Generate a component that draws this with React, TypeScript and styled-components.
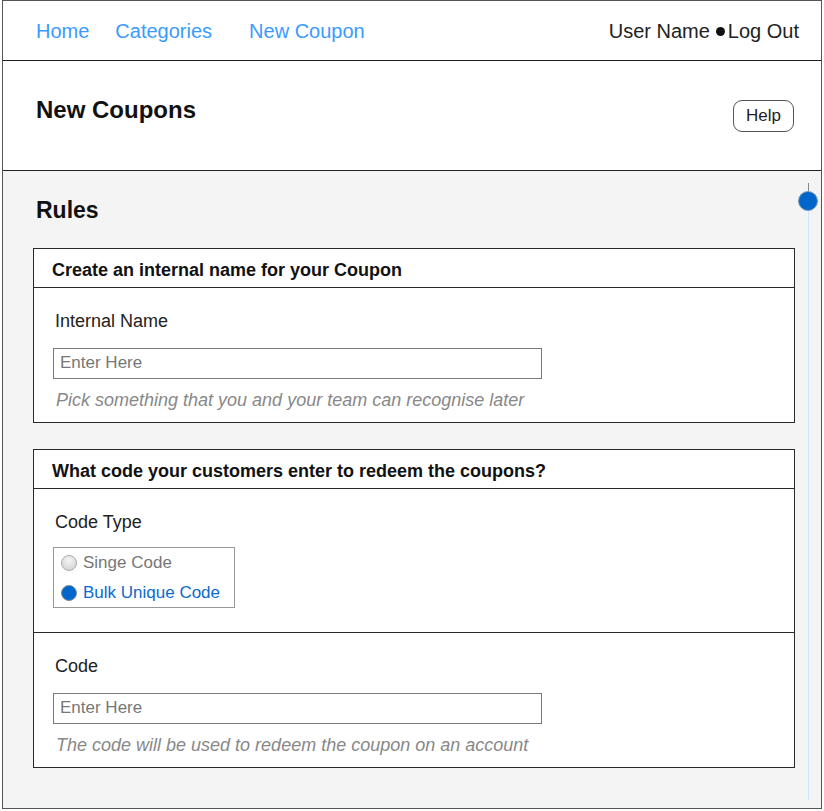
import React from "react";
import styled, { createGlobalStyle } from "styled-components";

const Global = createGlobalStyle`
  html, body { margin: 0; padding: 0; background: #ffffff; }
  body { font-family: "Liberation Sans", Arial, sans-serif; color: #222; }
  * { box-sizing: border-box; }
`;

const Frame = styled.div`
  width: 820px;
  height: 809px;
  margin-left: 2px;
  position: relative;
  background: #f4f4f4;
  border: 1px solid #555;
  display: flex;
  flex-direction: column;
`;

const Nav = styled.nav`
  height: 60px;
  background: #fff;
  border-bottom: 1.2px solid #222;
  display: flex;
  align-items: center;
  padding: 2px 22px 0 33px;
  font-size: 20px;
`;

const NavLink = styled.a<{ $gap: number }>`
  color: #3a9bff;
  text-decoration: none;
  margin-right: ${(p) => p.$gap}px;
`;

const UserBox = styled.div`
  margin-left: auto;
  display: flex;
  align-items: center;
  color: #222;
  font-size: 20px;
`;

const Dot = styled.span`
  display: inline-block;
  width: 9px;
  height: 9px;
  border-radius: 50%;
  background: #111;
  margin: 0 3px 0 6px;
`;

const TitlePanel = styled.header`
  height: 110px;
  background: #fff;
  border-bottom: 1.2px solid #222;
  display: flex;
  align-items: flex-start;
  justify-content: space-between;
  padding: 35px 27px 0 33px;
`;

const PageTitle = styled.h1`
  margin: 0;
  font-size: 24px;
  line-height: 28px;
  font-weight: bold;
  color: #111;
`;

const HelpButton = styled.button`
  margin-top: 4px;
  width: 61px;
  height: 32px;
  border: 1px solid #555;
  border-radius: 9px;
  background: #fff;
  font-family: "Liberation Sans", Arial, sans-serif;
  font-size: 17px;
  color: #222;
  padding: 0;
`;

const Main = styled.main`
  position: relative;
  flex: 1;
  padding: 25px 27px 0 30px;
  display: flex;
  flex-direction: column;
`;

const SectionTitle = styled.h2`
  margin: 0 0 24px 3px;
  font-size: 23px;
  line-height: 28px;
  font-weight: bold;
  color: #111;
`;

const Card = styled.section<{ $gapAfter: number }>`
  width: 762px;
  background: #fff;
  border: 1.2px solid #2a2a2a;
  margin-bottom: ${(p) => p.$gapAfter}px;
  display: flex;
  flex-direction: column;
`;

const CardHeader = styled.div`
  height: 39px;
  border-bottom: 1.2px solid #2a2a2a;
  display: flex;
  align-items: center;
  padding: 4px 0 0 18px;
  font-size: 18px;
  font-weight: bold;
  color: #111;
`;

const CardBody = styled.div<{ $top: number; $bottom: number; $divider?: boolean }>`
  padding: ${(p) => p.$top}px 0 ${(p) => p.$bottom}px 19px;
  border-bottom: ${(p) => (p.$divider ? "1.2px solid #2a2a2a" : "none")};
  display: flex;
  flex-direction: column;
  align-items: flex-start;
`;

const Label = styled.div<{ $gap: number }>`
  font-size: 18px;
  line-height: 22px;
  margin-left: 2px;
  color: #222;
  margin-bottom: ${(p) => p.$gap}px;
`;

const TextInput = styled.input`
  width: 489px;
  height: 31px;
  border: 1px solid #7a7a7a;
  background: #fff;
  padding: 0 6px 2px;
  font-family: "Liberation Sans", Arial, sans-serif;
  font-size: 17px;
  color: #222;
  outline: none;
  &::placeholder { color: #777; }
`;

const Hint = styled.div`
  margin-top: 10px;
  margin-left: 3px;
  font-size: 18px;
  line-height: 22px;
  font-style: italic;
  color: #888;
`;

const RadioGroup = styled.div`
  width: 182px;
  height: 61px;
  border: 1px solid #999;
  padding: 4px 0 0 7px;
  display: flex;
  flex-direction: column;
  gap: 8px;
`;

const RadioRow = styled.label<{ $selected: boolean }>`
  display: flex;
  align-items: center;
  height: 22px;
  font-size: 17px;
  color: ${(p) => (p.$selected ? "#0a6ad0" : "#777")};
`;

const RadioDot = styled.span<{ $selected: boolean }>`
  width: 16px;
  height: 16px;
  border-radius: 50%;
  margin-right: 6px;
  border: 1px solid ${(p) => (p.$selected ? "#7a8a9a" : "#aaa")};
  background: ${(p) =>
    p.$selected ? "#0066cc" : "radial-gradient(circle at 50% 30%, #f4f4f4, #cfcfcf)"};
`;

const SliderTrack = styled.div`
  position: absolute;
  right: 12px;
  top: 12px;
  bottom: 8px;
  width: 2px;
  display: flex;
  flex-direction: column;
  align-items: center;
`;

const TrackTop = styled.span`
  width: 1px;
  height: 8px;
  background: #888;
  flex: none;
`;

const Knob = styled.span`
  width: 20px;
  height: 20px;
  border-radius: 50%;
  background: #0066cc;
  border: 1px solid #7f9ab5;
  flex: none;
`;

const TrackLine = styled.span`
  width: 1px;
  flex: 1;
  background: #cfe6ff;
`;

export default function App() {
  return (
    <>
      <Global />
      <Frame>
        <Nav>
          <NavLink $gap={26}>Home</NavLink>
          <NavLink $gap={37}>Categories</NavLink>
          <NavLink $gap={0}>New Coupon</NavLink>
          <UserBox>
            User Name<Dot />Log Out
          </UserBox>
        </Nav>
        <TitlePanel>
          <PageTitle>New Coupons</PageTitle>
          <HelpButton>Help</HelpButton>
        </TitlePanel>
        <Main>
          <SectionTitle>Rules</SectionTitle>
          <Card $gapAfter={26}>
            <CardHeader>Create an internal name for your Coupon</CardHeader>
            <CardBody $top={22} $bottom={11}>
              <Label $gap={16}>Internal Name</Label>
              <TextInput placeholder="Enter Here" />
              <Hint>Pick something that you and your team can recognise later</Hint>
            </CardBody>
          </Card>
          <Card $gapAfter={0}>
            <CardHeader>What code your customers enter to redeem the coupons?</CardHeader>
            <CardBody $top={22} $bottom={24} $divider>
              <Label $gap={14}>Code Type</Label>
              <RadioGroup>
                <RadioRow $selected={false}>
                  <RadioDot $selected={false} />
                  Singe Code
                </RadioRow>
                <RadioRow $selected={true}>
                  <RadioDot $selected={true} />
                  Bulk Unique Code
                </RadioRow>
              </RadioGroup>
            </CardBody>
            <CardBody $top={22} $bottom={11}>
              <Label $gap={16}>Code</Label>
              <TextInput placeholder="Enter Here" />
              <Hint>The code will be used to redeem the coupon on an account</Hint>
            </CardBody>
          </Card>
          <SliderTrack>
            <TrackTop />
            <Knob />
            <TrackLine />
          </SliderTrack>
        </Main>
      </Frame>
    </>
  );
}
